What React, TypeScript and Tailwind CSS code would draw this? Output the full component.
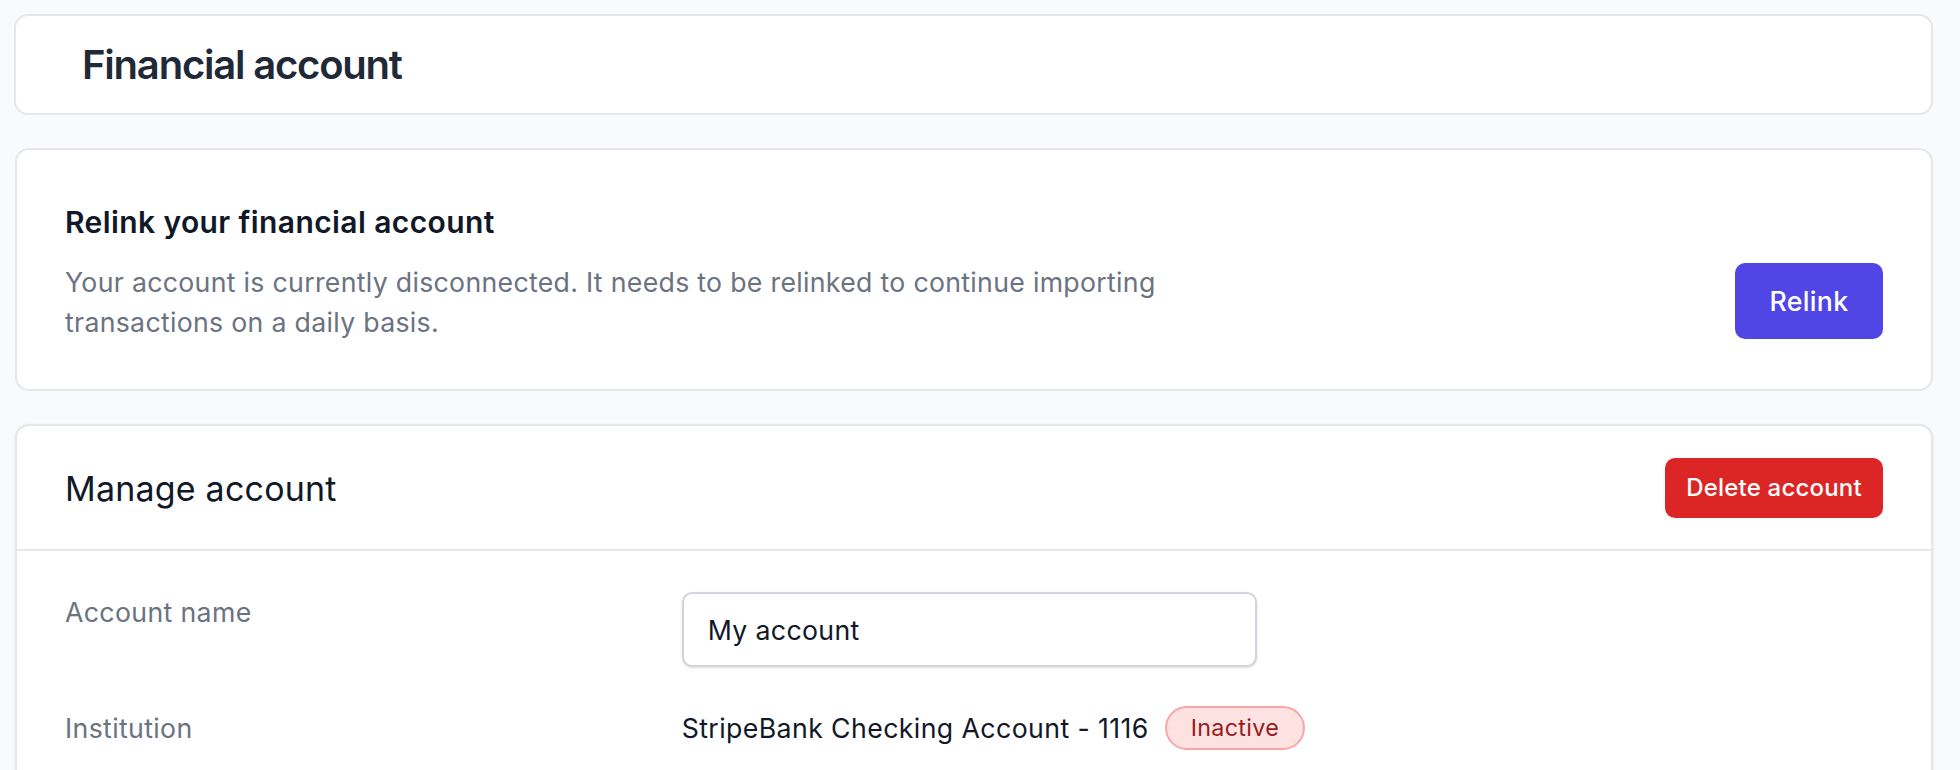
export default function App() {
  return (
    <div className="min-h-screen bg-[#f9fafb] pl-[14px] pr-[27px] pt-[14px] font-['Inter',sans-serif] antialiased">
      <div className="flex flex-col gap-[33px]">
        <div className="flex h-[101px] items-center rounded-[14px] border-2 border-[#e6e7eb] bg-white pl-[66px]">
          <h1 className="text-[40px] font-semibold tracking-[-1.2px] text-[#1f2937]">Financial account</h1>
        </div>

        <div className="ml-px flex items-end justify-between rounded-[14px] border-2 border-[#e6e7eb] bg-white px-[48px] pt-[52px] pb-[47px]">
          <div className="max-w-[1120px]">
            <h2 className="text-[30px] leading-[40px] font-semibold tracking-[0.4px] text-[#111827]">
              Relink your financial account
            </h2>
            <p className="mt-[20px] text-[26.7px] leading-[40px] tracking-[0.3px] text-[#6b7280]">
              Your account is currently disconnected. It needs to be relinked to continue importing transactions on a
              daily basis.
            </p>
          </div>
          <button className="mb-[3px] h-[76px] w-[148px] rounded-[10px] bg-[#4f46e5] text-[26.7px] font-medium tracking-[0.3px] text-white">
            Relink
          </button>
        </div>

        <div className="ml-px rounded-[14px] border-2 border-[#e6e7eb] bg-white pb-[80px] shadow-sm">
          <div className="flex items-center justify-between border-b-2 border-[#e5e7eb] px-[48px] pt-[32px] pb-[31px]">
            <h3 className="text-[34px] leading-[47px] tracking-[0.2px] text-[#111827]">Manage account</h3>
            <button className="h-[60px] w-[218px] rounded-[10px] bg-[#dc2626] text-[24px] font-medium tracking-[0.2px] text-white">
              Delete account
            </button>
          </div>

          <div className="flex flex-col gap-[41px] px-[48px] pt-[41px]">
            <div className="grid grid-cols-3 gap-x-[32px]">
              <div className="text-[26.7px] leading-[40px] tracking-[0.35px] text-[#6b7280]">Account name</div>
              <div className="col-span-2">
                <input
                  defaultValue="My account"
                  className="h-[75px] w-[575px] rounded-[10px] border-2 border-[#d1d5db] bg-white px-[24px] text-[26.7px] tracking-[0.35px] text-[#111827] shadow-sm outline-none"
                />
              </div>
            </div>

            <div className="grid grid-cols-3 gap-x-[32px]">
              <div className="text-[26.7px] leading-[40px] tracking-[0.35px] text-[#6b7280]">Institution</div>
              <div className="col-span-2 -mt-[2px] flex items-center gap-[16px]">
                <span className="text-[26.7px] leading-[40px] tracking-[0.4px] text-[#111827]">
                  StripeBank Checking Account - 1116
                </span>
                <span className="flex h-[44px] items-center rounded-full border-2 border-[#fca5a5] bg-[#fee2e2] px-[24px] text-[23.3px] tracking-[0.3px] text-[#991b1b]">
                  Inactive
                </span>
              </div>
            </div>
          </div>
        </div>
      </div>
    </div>
  )
}
